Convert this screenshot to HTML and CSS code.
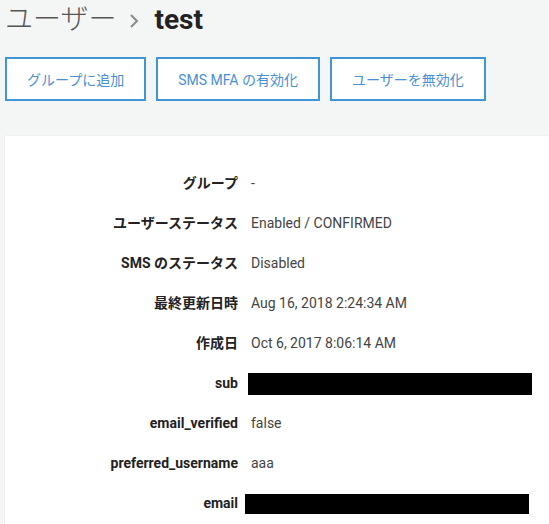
FILE: index.html
```html
<!DOCTYPE html>
<html>
<head>
  <title>ユーザー - test</title>
  <link rel="stylesheet" href="styles.css">
</head>
<body>

  <h1 class="crumbs">
    <span class="crumb-parent">ユーザー</span>
    <svg class="crumb-sep" width="12" height="16" viewBox="0 0 12 16"><path d="M3 2 L9 8 L3 14" fill="none" stroke="#8a8a8a" stroke-width="2"/></svg>
    <span class="crumb-current">test</span>
  </h1>

  <div class="actions">
    <button class="action-btn">グループに追加</button>
    <button class="action-btn">SMS MFA の有効化</button>
    <button class="action-btn">ユーザーを無効化</button>
  </div>

  <div class="card">
    <dl class="details">
      <dt>グループ</dt><dd>-</dd>
      <dt>ユーザーステータス</dt><dd>Enabled / CONFIRMED</dd>
      <dt>SMS のステータス</dt><dd>Disabled</dd>
      <dt>最終更新日時</dt><dd>Aug 16, 2018 2:24:34 AM</dd>
      <dt>作成日</dt><dd>Oct 6, 2017 8:06:14 AM</dd>
      <dt>sub</dt><dd><span class="redacted sub-box"></span></dd>
      <dt>email_verified</dt><dd>false</dd>
      <dt>preferred_username</dt><dd>aaa</dd>
      <dt>email</dt><dd><span class="redacted email-box"></span></dd>
    </dl>
  </div>

</body>
</html>
```

FILE: styles.css
```css
body {
  margin: 0;
  padding: 0 0 0 5px;
  background: #f4f5f5;
  font-family: Roboto, "Noto Sans CJK JP", sans-serif;
  color: #333;
  overflow: hidden;
  height: 524px;
}
.crumbs {
  display: flex;
  align-items: center;
  margin: 0;
  height: 40px;
  font-size: 28px;
  line-height: 40px;
}
.crumb-parent {
  font-weight: 300;
  color: #555;
}
.crumb-sep {
  margin: 2px 14px 0 12px;
}
.crumb-current {
  font-weight: 700;
  color: #222;
}
.actions {
  display: flex;
  gap: 10px;
  margin-top: 17px;
}
.action-btn {
  height: 44px;
  padding: 0 20px;
  background: #fff;
  border: 2px solid #4096d4;
  border-radius: 0;
  color: #4a8fd4;
  font-family: Roboto, "Noto Sans CJK JP", sans-serif;
  font-size: 14px;
}
.card {
  margin-top: 35px;
  background: #fff;
  box-shadow: 0 0 1px #d8dada;
  min-height: 400px;
  padding-top: 27px;
}
.details {
  display: grid;
  grid-template-columns: 233px 1fr;
  grid-auto-rows: 40px;
  column-gap: 13px;
  margin: 0;
  font-size: 14px;
}
.details dt {
  text-align: right;
  font-weight: 700;
  color: #222;
  line-height: 40px;
}
.details dd {
  margin: 0;
  color: #444;
  line-height: 40px;
  display: flex;
  align-items: center;
}
.redacted {
  display: block;
  background: #000;
}
.sub-box {
  width: 284px;
  height: 22px;
  margin-left: -3px;
  margin-top: 2px;
}
.email-box {
  width: 284px;
  height: 20px;
  margin-left: -6px;
  margin-top: 2px;
}
```
